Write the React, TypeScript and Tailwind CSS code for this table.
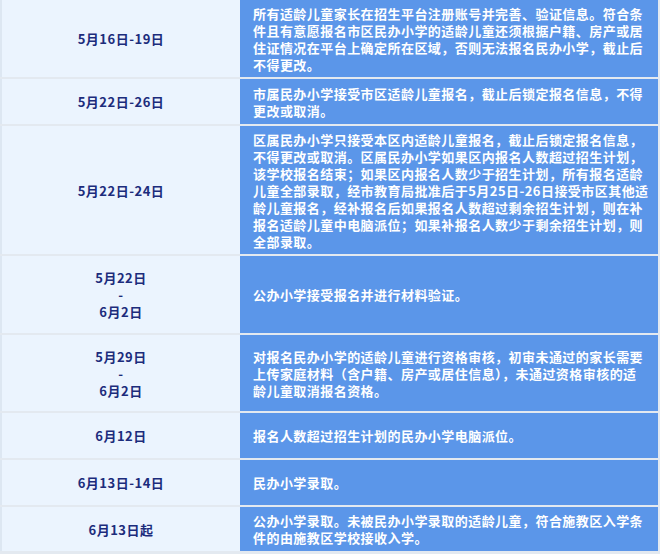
import React from 'react';

const rows: { date: string[]; text: string; h: string; pr?: string }[] = [
    {
        date: ['5月16日-19日'],
        text: '所有适龄儿童家长在招生平台注册账号并完善、验证信息。符合条件且有意愿报名市区民办小学的适龄儿童还须根据户籍、房产或居住证情况在平台上确定所在区域，否则无法报名民办小学，截止后不得更改。',
        h: 'h-[77px]',
    },
    {
        date: ['5月22日-26日'],
        text: '市属民办小学接受市区适龄儿童报名，截止后锁定报名信息，不得更改或取消。',
        h: 'h-[45px]',
    },
    {
        date: ['5月22日-24日'],
        text: '区属民办小学只接受本区内适龄儿童报名，截止后锁定报名信息，不得更改或取消。区属民办小学如果区内报名人数超过招生计划，该学校报名结束；如果区内报名人数少于招生计划，所有报名适龄儿童全部录取，经市教育局批准后于5月25日-26日接受市区其他适龄儿童报名，经补报名后如果报名人数超过剩余招生计划，则在补报名适龄儿童中电脑派位；如果补报名人数少于剩余招生计划，则全部录取。',
        h: 'h-[128px]',
    },
    {
        date: ['5月22日', '-', '6月2日'],
        text: '公办小学接受报名并进行材料验证。',
        h: 'h-[77px]',
    },
    {
        date: ['5月29日', '-', '6月2日'],
        text: '对报名民办小学的适龄儿童进行资格审核，初审未通过的家长需要上传家庭材料（含户籍、房产或居住信息），未通过资格审核的适龄儿童取消报名资格。',
        h: 'h-[76px]',
        pr: 'pr-[14px]',
    },
    {
        date: ['6月12日'],
        text: '报名人数超过招生计划的民办小学电脑派位。',
        h: 'h-[45px]',
    },
    {
        date: ['6月13日-14日'],
        text: '民办小学录取。',
        h: 'h-[45px]',
    },
    {
        date: ['6月13日起'],
        text: '公办小学录取。未被民办小学录取的适龄儿童，符合施教区入学条件的由施教区学校接收入学。',
        h: 'h-[44px]',
    },
];

export default function App() {
    return (
        <div className="w-[660px] h-[554px] bg-[#e3e9f0] font-['Noto_Sans_CJK_SC','Noto_Sans',sans-serif] font-bold overflow-hidden">
            <div className="flex flex-col gap-[2px] pr-[2px] pb-[3px]">
                {rows.map((row, idx) => (
                    <div key={idx} className={`flex ${row.h}`}>
                        <div className="w-[240px] shrink-0 bg-[#ebf4fe] border-l-2 border-[#dde7f2] flex flex-col items-center justify-center text-[13px] leading-[17px] text-[#1c2c7c] tracking-[0.5px]">
                            {row.date.map((d, i) => (
                                <span key={i}>{d}</span>
                            ))}
                        </div>
                        <div className={`flex-1 bg-[#5b96e9] flex items-center pl-[13px] ${row.pr ?? 'pr-[8px]'} text-[13px] leading-[17px] tracking-[0.45px] text-white`}>
                            <p>{row.text}</p>
                        </div>
                    </div>
                ))}
            </div>
        </div>
    );
}
